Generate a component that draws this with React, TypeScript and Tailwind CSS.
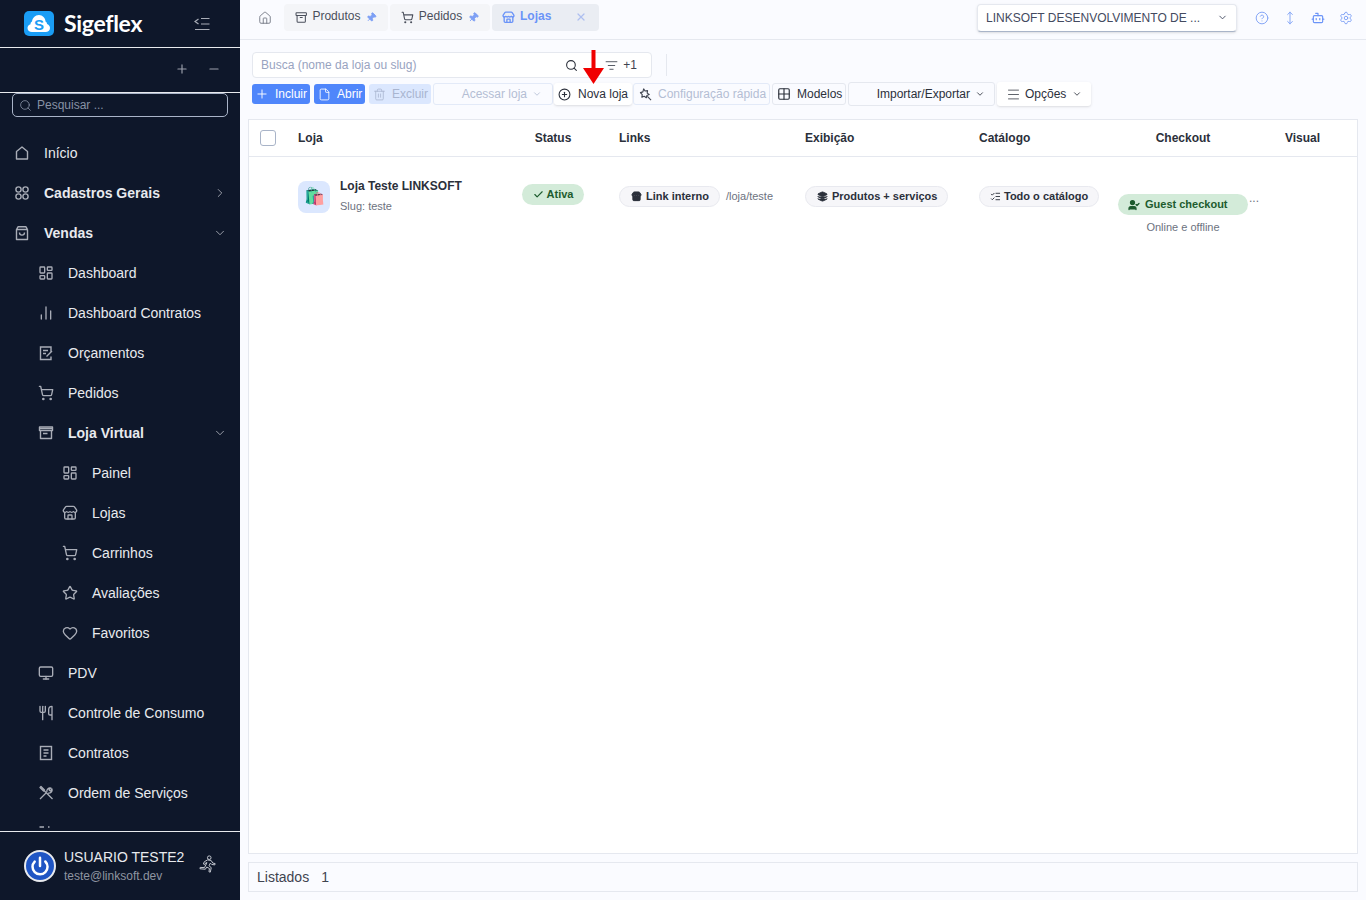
import {
  Bot,
  Check,
  ChevronDown,
  ChevronRight,
  CirclePlus,
  CircleQuestionMark,
  File,
  Grid2x2,
  Heart,
  Home,
  Layers,
  LayoutDashboard,
  ListChecks,
  ListFilter,
  ChartNoAxesColumn,
  Menu,
  Minus,
  Monitor,
  MoveVertical,
  Pin,
  Plus,
  Power,
  Search,
  Settings,
  ShoppingCart,
  Star,
  Store,
  Archive,
  Trash2,
  UserCheck,
  Utensils,
  X,
} from "lucide-react";
import type { ReactNode } from "react";

const iconClass = "w-4 h-4 shrink-0 text-[#a9adb7]";

const Apps = () => (
  <svg viewBox="0 0 16 16" className={iconClass} fill="none" stroke="currentColor" strokeWidth="1.4">
    <circle cx="4.5" cy="4.5" r="2.6" />
    <circle cx="11.5" cy="4.5" r="2.6" />
    <circle cx="4.5" cy="11.5" r="2.6" />
    <circle cx="11.5" cy="11.5" r="2.6" />
  </svg>
);

const House = () => (
  <svg viewBox="0 0 16 16" className={iconClass} fill="none" stroke="currentColor" strokeWidth="1.4">
    <path d="M2.500 14V6.500L8 2l5.500 4.500V14z" strokeLinejoin="round" />
  </svg>
);

const Bag = () => (
  <svg viewBox="0 0 16 16" className={iconClass} fill="none" stroke="currentColor" strokeWidth="1.4">
    <path d="M2.500 4.500V14.500h11V4.500zM2.500 4.500 4 1.800h8l1.500 2.700M5.500 7.500c0 3.500 5 3.500 5 0" strokeLinejoin="round" />
  </svg>
);

const EditDoc = () => (
  <svg viewBox="0 0 16 16" className={iconClass} fill="none" stroke="currentColor" strokeWidth="1.4">
    <path d="M13 7V2H2.500v12.500H13v-3M5 5.500h5M5 8.500h3M8.500 11.500l5.500-5.500" />
  </svg>
);

const Contract = () => (
  <svg viewBox="0 0 16 16" className={iconClass} fill="none" stroke="currentColor" strokeWidth="1.4">
    <rect x="2.500" y="1.500" width="11" height="13" />
    <path d="M5.500 5h5M5.500 8h5M5.500 11h3" />
  </svg>
);

const Tools = () => (
  <svg viewBox="0 0 16 16" className={iconClass} fill="none" stroke="currentColor" strokeWidth="1.3">
    <path d="M2 2.500 3 1.500l3.500 3.500-1 1zM6 5.500l8.500 8.500M2 14l7-7M9 7c-.8-2.200 1.500-4.800 4-4l-2 1.500.5 1 1 .5 1.500-2c.8 2.500-1.800 4.800-4 4" strokeLinejoin="round" />
  </svg>
);

const Drawer = () => (
  <svg viewBox="0 0 16 16" className={iconClass} fill="none" stroke="currentColor" strokeWidth="1.4">
    <path d="M1.500 2h13v3.500h-13zM2.500 5.500v8h11v-8M5 8.500h4.500" strokeLinejoin="round" />
    <path d="M2 3.500h12" />
  </svg>
);

const ClippedTop = () => (
  <svg viewBox="0 0 16 16" className={iconClass} fill="none" stroke="currentColor" strokeWidth="1.4">
    <path d="M1.500 2H6M10 2h1.500" />
  </svg>
);

const Runner = () => (
  <svg viewBox="0 0 20 20" className="w-[18px] h-[18px] -mt-[4px] text-[#c3c7cf]" fill="none" stroke="currentColor" strokeWidth="1.1" strokeLinejoin="round">
    <circle cx="12.500" cy="3" r="2" />
    <path d="M7 7.500 10.500 5.500l4 .5 2 3 2.500.5-.3 1.500-3.500-.5-1.500-1.500-1.500 3 2.500 2-1 5-1.500-.3.5-3.700-3-1.700-1.500 2.500-6-.5.2-1.500 4.800.2 2.800-5.500-1.500.3-1.300 2-1.200-.8z" />
  </svg>
);

const QuickConfig = () => (
  <svg viewBox="0 0 14 14" className="w-[13px] h-[13px] text-[#3f4450]" fill="none" stroke="currentColor" strokeWidth="1.2" strokeLinejoin="round">
    <path d="M5 1l1.500 2.200 2.700-.4-.4 2.700L11 7 8.500 8l-.6 2.500-2.300-1.600-2.500 1 .4-2.700L1.500 5l2.700-.8z" />
    <path d="M9 9l4 4" />
  </svg>
);

function NavRow({
  icon,
  label,
  depth = 0,
  bold = false,
  caret,
}: {
  icon: ReactNode;
  label: string;
  depth?: 0 | 1 | 2;
  bold?: boolean;
  caret?: "down" | "right";
}) {
  const pad = depth === 0 ? "pl-[14px]" : depth === 1 ? "pl-[38px]" : "pl-[62px]";
  return (
    <div className={`h-10 flex items-center pr-[13px] shrink-0 ${pad}`}>
      <span className="w-[16px] flex justify-center">{icon}</span>
      <span className={`ml-[14px] flex-1 text-[14px] text-[#e8eaee] ${bold ? "font-bold" : ""}`}>{label}</span>
      {caret === "down" && <ChevronDown className="w-[14px] h-[14px] text-[#a9adb7]" strokeWidth={1.5} />}
      {caret === "right" && <ChevronRight className="w-[14px] h-[14px] text-[#a9adb7]" strokeWidth={1.5} />}
    </div>
  );
}

function Sidebar() {
  return (
    <aside className="w-[240px] h-[900px] shrink-0 bg-[#0e172a] flex flex-col">
      <div className="h-[48px] shrink-0 border-b border-[#e8eaee] flex items-center pl-[24px] pr-[30px]">
        <svg viewBox="0 0 30 25" className="w-[30px] h-[25px]">
          <rect width="30" height="25" rx="5" fill="#1a9df5" />
          <path d="M8 21c-2.500 0-4.500-1.500-4.500-4 0-2 1.500-3.500 3-3.800C6.500 12 7 11 8 10.500 8.500 7 11 4 15 4c3.500 0 6.500 3 6.500 6.500 1 .5 1.500 1.500 1.500 2.500 1.500.5 3 2 3 4 0 2.500-2 4-4.500 4z" fill="#fff" />
          <text x="15" y="18.500" textAnchor="middle" fontSize="15" fontWeight="700" fontFamily="Liberation Sans" fill="#1a9df5">S</text>
        </svg>
        <span className="ml-[10px] text-[23px] leading-none font-bold text-white tracking-[-0.3px] font-['Lato',sans-serif]">Sigeflex</span>
        <span className="ml-auto">
          <svg viewBox="0 0 16 14" className="w-[16px] h-[14px] text-[#a9adb7]" fill="none" stroke="currentColor" strokeWidth="1.2">
            <path d="M4.500 2 1 4.500 4.500 7M7 1.500h8.500M7 7h8.500M1 12.500h14.500" />
          </svg>
        </span>
      </div>
      <div className="h-[45px] shrink-0 border-b border-[#e8eaee] flex items-center justify-end gap-[18px] pr-[19px] pb-[2px]">
        <Plus className="w-[14px] h-[14px] text-[#9ba0ab]" strokeWidth={2} />
        <Minus className="w-[14px] h-[14px] text-[#9ba0ab]" strokeWidth={2} />
      </div>
      <div className="px-[12px] shrink-0">
        <div className="h-[24px] rounded-[5px] border border-[#a9b4c8] flex items-center pl-[6px] gap-[5px]">
          <Search className="w-[13px] h-[13px] text-[#8791a5]" strokeWidth={1.5} />
          <span className="text-[12px] text-[#8791a5]">Pesquisar ...</span>
        </div>
      </div>
      <div className="flex-1 min-h-0 overflow-hidden mt-[16px] flex flex-col">
        <NavRow icon={<House />} label="Início" />
        <NavRow icon={<Apps />} label="Cadastros Gerais" bold caret="right" />
        <NavRow icon={<Bag />} label="Vendas" bold caret="down" />
        <NavRow depth={1} icon={<LayoutDashboard className={iconClass} strokeWidth={2} />} label="Dashboard" />
        <NavRow depth={1} icon={<ChartNoAxesColumn className={iconClass} strokeWidth={2} />} label="Dashboard Contratos" />
        <NavRow depth={1} icon={<EditDoc />} label="Orçamentos" />
        <NavRow depth={1} icon={<ShoppingCart className={iconClass} strokeWidth={2} />} label="Pedidos" />
        <NavRow depth={1} icon={<Drawer />} label="Loja Virtual" bold caret="down" />
        <NavRow depth={2} icon={<LayoutDashboard className={iconClass} strokeWidth={2} />} label="Painel" />
        <NavRow depth={2} icon={<Store className={iconClass} strokeWidth={2} />} label="Lojas" />
        <NavRow depth={2} icon={<ShoppingCart className={iconClass} strokeWidth={2} />} label="Carrinhos" />
        <NavRow depth={2} icon={<Star className={iconClass} strokeWidth={2} />} label="Avaliações" />
        <NavRow depth={2} icon={<Heart className={iconClass} strokeWidth={2} />} label="Favoritos" />
        <NavRow depth={1} icon={<Monitor className={iconClass} strokeWidth={2} />} label="PDV" />
        <NavRow depth={1} icon={<Utensils className={iconClass} strokeWidth={2} />} label="Controle de Consumo" />
        <NavRow depth={1} icon={<Contract />} label="Contratos" />
        <NavRow depth={1} icon={<Tools />} label="Ordem de Serviços" />
        <NavRow depth={1} icon={<ClippedTop />} label="" />
      </div>
      <div className="h-[69px] shrink-0 border-t border-[#e8eaee] flex items-center pl-[24px] pr-[24px]">
        <div className="w-[32px] h-[32px] rounded-full bg-[#1f55c4] border-2 border-[#e8eaee] flex items-center justify-center">
          <Power className="w-[20px] h-[20px] text-white" strokeWidth={3} />
        </div>
        <div className="ml-[8px] mt-[2px] flex-1 min-w-0">
          <div className="text-[14px] leading-[17px] text-[#e8eaee]">USUARIO TESTE2</div>
          <div className="mt-[2px] text-[12px] leading-[17px] text-[#8f95a1]">teste@linksoft.dev</div>
        </div>
        <Runner />
      </div>
    </aside>
  );
}

function TabItem({ icon, label, width, pinned = true, active = false }: { icon: ReactNode; label: string; width: string; pinned?: boolean; active?: boolean }) {
  return (
    <div className={`h-[27px] rounded-[4px] flex items-center ${width} ${active ? "bg-[#eaedf3] pl-[10px] pr-[12px]" : "bg-[#f4f5f8] pl-[11px] pr-[11px]"}`}>
      {icon}
      <span className={`ml-[5px] text-[12px] relative -top-[1px] ${active ? "font-bold text-[#6b94f8]" : "text-[#4a4f5b]"}`}>{label}</span>
      {pinned ? (
        <Pin className="ml-[6px] w-[11px] h-[11px] rotate-45 text-[#7ea0f5] fill-[#7ea0f5]" />
      ) : (
        <X className="ml-auto w-[12px] h-[12px] text-[#aebff0]" strokeWidth={2.5} />
      )}
    </div>
  );
}

function TopBar() {
  return (
    <div className="h-[40px] shrink-0 border-b border-[#e5e8ef] flex items-center pl-[18px] pr-[13px]">
      <Home className="w-[14px] h-[14px] text-[#6f7480] -mt-[4px]" strokeWidth={1.5} />
      <div className="ml-[12px] flex items-center gap-[2px] -mt-[5px]">
        <TabItem width="w-[104px]" icon={<Archive className="w-[13px] h-[13px] text-[#4a4f5b]" strokeWidth={2} />} label="Produtos" />
        <TabItem width="w-[100px]" icon={<ShoppingCart className="w-[13px] h-[13px] text-[#4a4f5b]" strokeWidth={2} />} label="Pedidos" />
        <TabItem width="w-[107px]" icon={<Store className="w-[13px] h-[13px] text-[#6b94f8]" strokeWidth={2.5} />} label="Lojas" pinned={false} active />
      </div>
      <div className="ml-auto w-[260px] h-[28px] bg-white rounded-[4px] border border-[#e5e8ef] border-b-[#a9b4c8] flex items-center pl-[8px] pr-[8px] -mt-[4px] shadow-sm">
        <span className="flex-1 text-[12px] text-[#434a60] truncate">LINKSOFT DESENVOLVIMENTO DE ...</span>
        <ChevronDown className="w-[11px] h-[11px] text-[#434a60]" />
      </div>
      <div className="ml-[18px] flex items-center gap-[14px] -mt-[4px]">
        <CircleQuestionMark className="w-[14px] h-[14px] text-[#7ea0f5]" strokeWidth={1.6} />
        <MoveVertical className="w-[14px] h-[14px] text-[#7ea0f5]" strokeWidth={1.6} />
        <Bot className="w-[14px] h-[14px] text-[#6b94f8]" strokeWidth={2} />
        <Settings className="w-[14px] h-[14px] text-[#7ea0f5]" strokeWidth={1.6} />
      </div>
    </div>
  );
}

function Toolbar() {
  return (
    <div className="pl-[12px] shrink-0">
      <div className="mt-[12px] flex items-center">
        <div className="w-[400px] h-[26px] bg-white rounded-[4px] border border-[#e5e8ef] flex items-center pl-[8px]">
          <span className="flex-1 text-[12px] text-[#98a3bf]">Busca (nome da loja ou slug)</span>
          <Search className="w-[13px] h-[13px] text-[#2b303b] mr-[27px]" strokeWidth={2} />
          <ListFilter className="w-[13px] h-[13px] text-[#3f4450]" strokeWidth={1.6} />
          <span className="ml-[5px] mr-[14px] text-[12px] text-[#3f4450]">+1</span>
        </div>
        <div className="ml-[14px] w-px h-[22px] bg-[#e5e8ef]" />
      </div>
      <div className="mt-[5px] flex items-center h-[22px]">
        <div className="w-[58px] h-[20px] rounded-[3px] bg-[#4f86fb] flex items-center pl-[3px] text-white text-[12px]">
          <Plus className="w-[14px] h-[14px]" strokeWidth={1.6} />
          <span className="ml-[6px]">Incluir</span>
        </div>
        <div className="ml-[4px] w-[51px] h-[20px] rounded-[3px] bg-[#4f86fb] flex items-center pl-[4px] text-white text-[12px]">
          <File className="w-[13px] h-[13px]" strokeWidth={1.6} />
          <span className="ml-[6px]">Abrir</span>
        </div>
        <div className="ml-[4px] w-[62px] h-[20px] rounded-[3px] bg-[#dbe7fe] flex items-center pl-[4px] text-[#a9b5d0] text-[12px]">
          <Trash2 className="w-[13px] h-[13px]" strokeWidth={1.5} />
          <span className="ml-[6px]">Excluir</span>
        </div>
        <div className="ml-[2px] w-[120px] h-[22px] rounded-[3px] border border-[#e3eaf8] flex items-center justify-end pr-[10px] text-[#b4bed4] text-[12px]">
          Acessar loja
          <ChevronDown className="ml-[5px] w-[10px] h-[10px]" />
        </div>
        <div className="ml-[1px] w-[78px] h-[22px] rounded-[3px] bg-white shadow-sm flex items-center pl-[4px] text-[#2b303b] text-[12px]">
          <CirclePlus className="w-[13px] h-[13px]" strokeWidth={2} />
          <span className="ml-[7px]">Nova loja</span>
        </div>
        <div className="ml-[1px] w-[137px] h-[22px] rounded-[3px] border border-[#e3eaf8] flex items-center pl-[5px] text-[#b4bed4] text-[12px]">
          <QuickConfig />
          <span className="ml-[6px]">Configuração rápida</span>
        </div>
        <div className="ml-[2px] w-[74px] h-[22px] rounded-[3px] border border-[#e5e8ef] flex items-center pl-[4px] text-[#2b303b] text-[12px]">
          <Grid2x2 className="w-[14px] h-[14px]" strokeWidth={2} />
          <span className="ml-[6px]">Modelos</span>
        </div>
        <div className="ml-[2px] w-[147px] h-[24px] rounded-[3px] border border-[#e5e8ef] flex items-center justify-end pr-[9px] text-[#2b303b] text-[12px]">
          Importar/Exportar
          <ChevronDown className="ml-[5px] w-[10px] h-[10px]" />
        </div>
        <div className="ml-[2px] w-[94px] h-[24px] rounded-[3px] bg-white shadow-sm flex items-center pl-[9px] text-[#2b303b] text-[12px]">
          <Menu className="w-[15px] h-[15px]" strokeWidth={1.2} />
          <span className="ml-[4px]">Opções</span>
          <ChevronDown className="ml-[6px] w-[10px] h-[10px]" />
        </div>
      </div>
    </div>
  );
}

function Chip({ icon, children, tight = false }: { icon: ReactNode; children: ReactNode; tight?: boolean }) {
  return (
    <span className={`inline-flex items-center h-[21px] rounded-full bg-[#f6f6f9] border border-[#e8e9ef] pr-[10px] pb-[1px] text-[11px] font-semibold text-[#2b303b] whitespace-nowrap ${tight ? "pl-[10px]" : "pl-[11px]"}`}>
      {icon}
      <span className={tight ? "ml-[3px]" : "ml-[4px]"}>{children}</span>
    </span>
  );
}

function StoresTable() {
  const headCell = "text-[12px] font-semibold text-[#2b303b]";
  return (
    <div className="ml-[8px] mr-[8px] mt-[14px] flex-1 min-h-0 bg-white border border-[#e5e8ef] flex flex-col">
      <div className="h-[37px] shrink-0 border-b border-[#e5e8ef] grid grid-cols-[49px_224px_62px_221px_174px_139px_130px_1fr] items-center">
        <div className="pl-[11px]">
          <div className="w-4 h-4 rounded-[3px] border border-[#a9b4c8] bg-white" />
        </div>
        <div className={headCell}>Loja</div>
        <div className={`${headCell} text-center`}>Status</div>
        <div className={`${headCell} ml-[35px]`}>Links</div>
        <div className={headCell}>Exibição</div>
        <div className={headCell}>Catálogo</div>
        <div className={`${headCell} text-center`}>Checkout</div>
        <div className={`${headCell} text-center`}>Visual</div>
      </div>
      <div className="grid grid-cols-[49px_224px_62px_221px_174px_139px_130px_1fr] items-start">
        <div />
        <div className="mt-[24px] flex">
          <div className="w-[32px] h-[32px] rounded-[8px] bg-[#dbe7fe] flex items-center justify-center text-[17px]">🛍️</div>
          <div className="ml-[10px]">
            <div className="-mt-[3px] text-[12px] leading-[16px] font-semibold text-[#2b303b]">Loja Teste LINKSOFT</div>
            <div className="mt-[4px] text-[11px] leading-[16px] text-[#6c7280]">Slug: teste</div>
          </div>
        </div>
        <div className="mt-[27px] h-[21px] rounded-full bg-[#d3ebd9] flex items-center justify-center pb-[1px] text-[11px] font-semibold text-[#1d5c2e]">
          <Check className="w-[11px] h-[11px]" strokeWidth={2.5} />
          <span className="ml-[3px]">Ativa</span>
        </div>
        <div className="mt-[29px] ml-[35px] flex items-center">
          <Chip icon={<Store className="w-[11px] h-[11px] fill-[#2b303b]" />}>Link interno</Chip>
          <span className="ml-[6px] text-[11px] text-[#6c7280]">/loja/teste</span>
        </div>
        <div className="mt-[29px] flex">
          <Chip icon={<Layers className="w-[11px] h-[11px] fill-[#2b303b]" />}>Produtos + serviços</Chip>
        </div>
        <div className="mt-[29px] flex">
          <Chip tight icon={<ListChecks className="w-[11px] h-[11px]" />}>Todo o catálogo</Chip>
        </div>
        <div className="mt-[37px] flex flex-col items-center">
          <div className="w-full h-[21px] rounded-full bg-[#d3ebd9] flex items-center pl-[10px] text-[11px] font-semibold text-[#1d5c2e]">
            <UserCheck className="w-[12px] h-[12px] fill-[#1d5c2e]" strokeWidth={2.5} />
            <span className="ml-[5px]">Guest checkout</span>
          </div>
          <div className="mt-[4px] text-[11px] leading-[16px] text-[#6c7280]">Online e offline</div>
        </div>
        <div className="mt-[33px] ml-[1px] text-[12px] leading-[16px] text-[#6c7280]">...</div>
      </div>
    </div>
  );
}

export default function App() {
  return (
    <div className="relative w-[1366px] h-[900px] flex overflow-hidden bg-[#fafbff] font-['Liberation_Sans',sans-serif]">
      <Sidebar />
      <main className="flex-1 min-w-0 flex flex-col">
        <TopBar />
        <Toolbar />
        <StoresTable />
        <div className="mx-[8px] mt-[8px] mb-[8px] h-[30px] shrink-0 border border-[#e5e8ef] flex items-center pl-[8px] text-[14px] text-[#3f4450]">
          <span>Listados</span>
          <span className="ml-[12px]">1</span>
        </div>
      </main>
      <svg viewBox="0 0 22 34" className="absolute left-[583px] top-[50px] w-[22px] h-[34px]">
        <path d="M8.500 0h4v18H21L10.500 34 0 18h8.500z" fill="#f00000" />
      </svg>
    </div>
  );
}
